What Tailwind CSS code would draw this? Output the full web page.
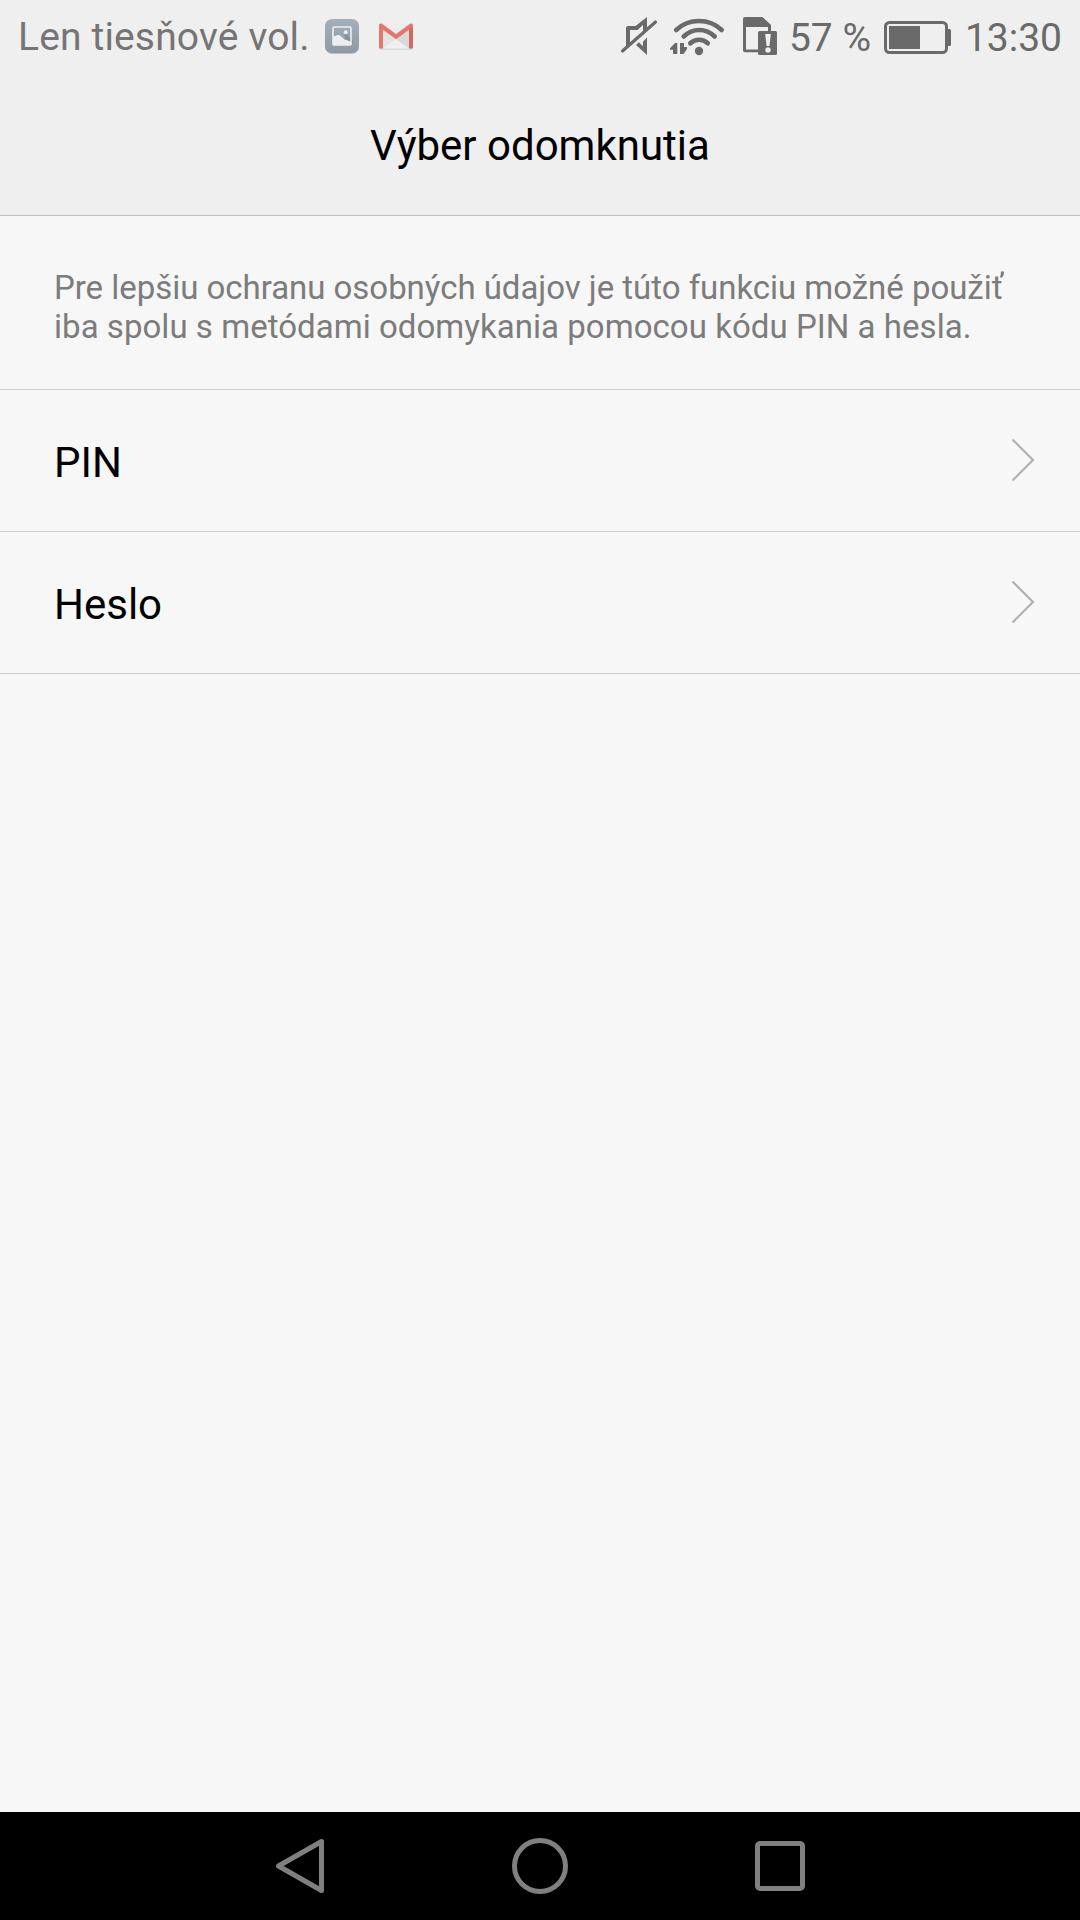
<!DOCTYPE html>
<html lang="sk">
<head>
   <meta charset="UTF-8">
   <meta name="viewport" content="width=device-width, initial-scale=1.0">
   <script src="https://cdn.jsdelivr.net/npm/@tailwindcss/browser@4"></script>
   <title>Výber odomknutia</title>
</head>
<body class="bg-[#f7f7f7] font-[Roboto,sans-serif] text-black">
   <div class="flex flex-col w-[1080px] h-[1920px] overflow-hidden">
      <header class="flex flex-col h-[216px] bg-[#efefef] border-b border-[#c1c1c1]">
         <!-- status bar -->
         <div class="flex items-center h-[74px] pl-[18px] pr-[18px] text-[39px] leading-[74px] text-[#757575] whitespace-nowrap">
            <span class="w-[306px] tracking-[0.15px]">Len tiesňové vol.</span>
            <svg class="w-[36px] h-[74px] shrink-0" viewBox="324 0 36 74">
               <defs>
                  <linearGradient id="tile" x1="0" y1="0" x2="0" y2="1">
                     <stop offset="0" stop-color="#a3b0b9"/>
                     <stop offset="1" stop-color="#8f9ba3"/>
                  </linearGradient>
               </defs>
               <rect x="325" y="20" width="34" height="34" rx="7" fill="#7d868c" opacity=".45"/>
               <rect x="325" y="19" width="34" height="34" rx="7" fill="url(#tile)"/>
               <path d="M346 45h5l2-2v-2l-9-9z" fill="#87939b"/>
               <rect x="333" y="27" width="18" height="18" rx="1" fill="none" stroke="#eceeef" stroke-width="1.6"/>
               <path d="M333 36.500l3.500-1c1.500-.8 3-.6 4 .4l3.500 3c.8.800 1.700 1.300 2.500 1l5 2.100v3h-18.500z" fill="#eceeef"/>
               <circle cx="345.700" cy="32.300" r="2" fill="#eceeef"/>
            </svg>
            <svg class="w-[36px] h-[74px] shrink-0 ml-[18px]" viewBox="378 0 36 74">
               <rect x="379" y="24" width="34" height="25.500" rx="1.500" fill="#c9c9c9"/>
               <rect x="379" y="23" width="34" height="25.500" rx="1.500" fill="#ededed"/>
               <path d="M396 38.500l13-9.500v19.500h-5z" fill="#d9d9d9"/>
               <path d="M383 29l13 9.500-13 10z" fill="#e4e4e4"/>
               <path d="M383 48.500l11-8 2 1.500 2-1.500 11 8z" fill="#f0f0f0"/>
               <path d="M379 25.500v21.500q0 1.500 1.500 1.500h2.500v-21z" fill="#e5766c"/>
               <path d="M413 25.500v21.500q0 1.500-1.500 1.500h-2.500v-21z" fill="#cf6a60"/>
               <path d="M379 25.500c0-2 2-2.500 3.300-1.600l13.700 10 13.700-10c1.300-.9 3.300-.4 3.300 1.600 0 1-.5 1.700-1.300 2.300l-15.700 11.400-15.700-11.400c-.8-.6-1.300-1.300-1.300-2.300z" fill="#e5766c"/>
            </svg>
            <div class="flex items-center ml-auto text-[#6a6a6a]">
               <!-- muted -->
               <svg class="w-[38px] h-[74px]" viewBox="620 0 38 74">
                  <path d="M626 28q0-2 2-2h7.500l11.500-9v12.500l-4 3.500v-8l-5.500 5h-7.500v13l-4 3.500z" fill="#6a6a6a"/>
                  <path d="M647 37.500v17.500l-11-10 2.800-2.800 4.200 4v-4.500z" fill="#6a6a6a"/>
                  <path d="M622.500 51l33-29" stroke="#6a6a6a" stroke-width="3.200" stroke-linecap="round"/>
               </svg>
               <!-- wi-fi -->
               <svg class="w-[56px] h-[74px] ml-[11px]" viewBox="669 0 56 74">
                  <g fill="none" stroke="#6a6a6a" stroke-width="4.600" stroke-linecap="round">
                     <path d="M676.200 30c12.500-12 33-12 45.500 0"/>
                     <path d="M683.700 36.500c9-8.700 22-8.700 31 0"/>
                     <path d="M690.300 43.300c5-4.700 12.500-4.700 17.500 0"/>
                  </g>
                  <circle cx="699" cy="51" r="4.200" fill="#6a6a6a"/>
                  <path d="M677.300 43v11h-4.300v-4.200h-3v-1.600l5-5.200zM680 43h4v4h3v2l-3.500 5h-3.500z" fill="#6a6a6a"/>
               </svg>
               <!-- sim alert -->
               <svg class="w-[36px] h-[74px] ml-[17px]" viewBox="742 0 36 74">
                  <path d="M745 17h17.500l8.500 8v6h-3v-4h-22v22.500h13v2.800h-14q-2 0-2-2v-31.300q0-2 2-2z" fill="#6a6a6a"/>
                  <rect x="758" y="31" width="19" height="24" rx="1.500" fill="#6a6a6a"/>
                  <path d="M765.200 34h5.600l-1.300 12h-3z" fill="#efefef"/>
                  <circle cx="768" cy="50" r="2.700" fill="#efefef"/>
               </svg>
               <span class="w-[94px] ml-[11px] pt-[2px]">57 %</span>
               <!-- battery -->
               <svg class="w-[68px] h-[74px]" viewBox="883 0 68 74">
                  <rect x="885.500" y="22.500" width="61" height="30" rx="4" fill="none" stroke="#6a6a6a" stroke-width="3"/>
                  <path d="M889 26h31v23h-31z" fill="#6a6a6a"/>
                  <path d="M947 29h2.500q1.500 0 1.500 1.500v14q0 1.500-1.500 1.500h-2.500z" fill="#6a6a6a"/>
               </svg>
               <span class="ml-[14px] pt-[2px]">13:30</span>
            </div>
         </div>
         <h1 class="text-center text-[42px] leading-[143px]">Výber odomknutia</h1>
      </header>

      <main class="grow">
         <p class="h-[174px] pt-[52px] pl-[54px] text-[33px] leading-[39px] text-[#7c7c7c] whitespace-nowrap border-b border-[#cfcfcf]">
            <span class="tracking-[-0.035px]">Pre lepšiu ochranu osobných údajov je túto funkciu možné použiť</span><br>
            <span class="tracking-[0.04px]">iba spolu s metódami odomykania pomocou kódu PIN a hesla.</span>
         </p>
         <ul>
            <li class="flex justify-between items-center h-[142px] pl-[54px] pr-[45px] border-b border-[#cfcfcf]">
               <span class="text-[42px] leading-[60px] pt-[4px]">PIN</span>
               <svg class="w-[24px] h-[44px] mb-[2px]" viewBox="0 0 24 44">
                  <path d="M1.500 1.500l20.500 20.500-20.500 20.500" fill="none" stroke="#b0b0b0" stroke-width="2.200"/>
               </svg>
            </li>
            <li class="flex justify-between items-center h-[142px] pl-[54px] pr-[45px] border-b border-[#cfcfcf]">
               <span class="text-[42px] leading-[60px] pt-[4px]">Heslo</span>
               <svg class="w-[24px] h-[44px] mb-[2px]" viewBox="0 0 24 44">
                  <path d="M1.500 1.500l20.500 20.500-20.500 20.500" fill="none" stroke="#b0b0b0" stroke-width="2.200"/>
               </svg>
            </li>
         </ul>
      </main>

      <!-- navigation bar -->
      <nav class="flex items-center justify-center gap-[180px] h-[108px] bg-black">
         <svg class="w-[60px] h-[60px]" viewBox="0 0 60 60" fill="none" stroke="#808080" stroke-width="5" stroke-linejoin="round">
            <path d="M51.500 5.500v49L8.500 30z"/>
         </svg>
         <svg class="w-[60px] h-[60px]" viewBox="0 0 60 60" fill="none" stroke="#808080" stroke-width="5">
            <circle cx="30" cy="30" r="25.500"/>
         </svg>
         <svg class="w-[60px] h-[60px]" viewBox="0 0 60 60" fill="none" stroke="#808080" stroke-width="5">
            <rect x="7.500" y="7.500" width="45" height="45" rx="2.500"/>
         </svg>
      </nav>
   </div>
</body>
</html>
